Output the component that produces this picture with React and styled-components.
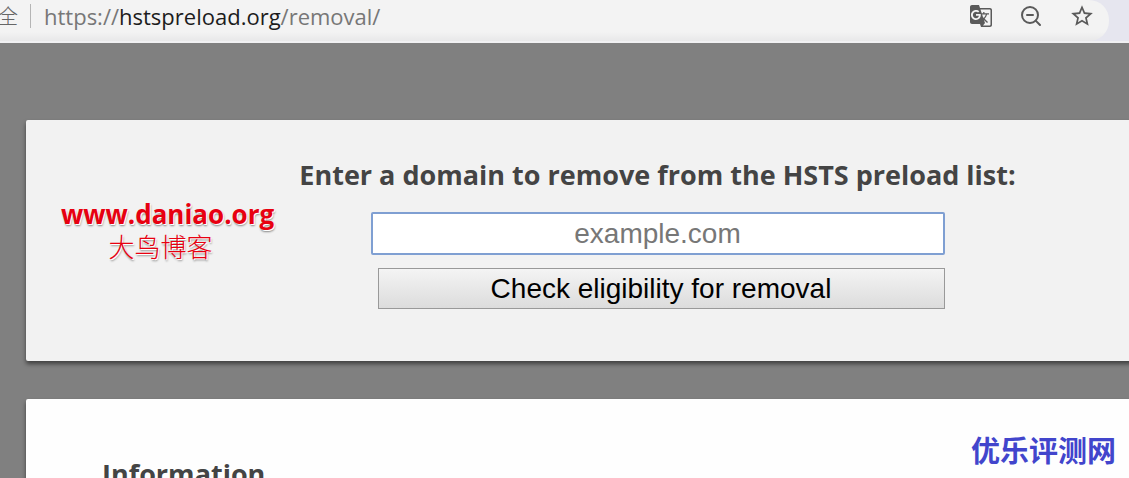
import React, { useState } from 'react';
import styled, { createGlobalStyle } from 'styled-components';
import { MdGTranslate, MdStarBorder } from 'react-icons/md';
import { ZoomOut } from 'lucide-react';

const App = () => {
    const [domain, setDomain] = useState('');

    return (
        <Page>
            <GlobalStyle />
            <Toolbar>
                <AddressBar>
                    <Security>全</Security>
                    <Divider />
                    <Url>https://<Host>hstspreload.org</Host>/removal/</Url>
                    <Actions>
                        <IconButton type="button" aria-label="Translate this page"><MdGTranslate size={24} /></IconButton>
                        <IconButton type="button" aria-label="Zoom out"><ZoomOut size={24} /></IconButton>
                        <IconButton type="button" aria-label="Bookmark this page"><MdStarBorder size={26} /></IconButton>
                    </Actions>
                </AddressBar>
            </Toolbar>
            <Content>
                <Card $background="#f2f2f2">
                    <Form onSubmit={(event) => event.preventDefault()}>
                        <Question htmlFor="domain">Enter a domain to remove from the HSTS preload list:</Question>
                        <Fields>
                            <DomainInput id="domain" type="text" placeholder="example.com" value={domain} onChange={(event) => { setDomain(event.target.value); }} />
                            <SubmitButton type="submit">Check eligibility for removal</SubmitButton>
                        </Fields>
                    </Form>
                    <BlogMark>
                        <strong>www.daniao.org</strong>
                        <BlogName>大鸟博客</BlogName>
                    </BlogMark>
                </Card>
                <Card $background="#fefefe">
                    <InfoTitle>Information</InfoTitle>
                </Card>
            </Content>
            <SiteMark>优乐评测网</SiteMark>
        </Page>
    );
}

const GlobalStyle = createGlobalStyle`
    * {
        box-sizing: border-box;
    }
    body {
        margin: 0;
        background: #808080;
        font-family: "Open Sans", "Noto Sans CJK SC", sans-serif;
    }
    `;

const Page = styled.div`
    position: relative;
    height: 100vh;
    overflow: hidden;
    `;

const Toolbar = styled.header`
    height: 43px;
    padding-right: 20px;
    background: #e6e6ef;
    border-bottom: 2px solid #f0f0f2;
    `;

const AddressBar = styled.div`
    display: flex;
    align-items: center;
    height: 41px;
    padding-bottom: 9px;
    background: linear-gradient(#f3f3f3 32px, #e8e8e9);
    border-radius: 0 20px 20px 0;
    `;

const Security = styled.span`
    display: flex;
    justify-content: flex-end;
    width: 18px;
    overflow: hidden;
    color: #666;
    font-family: "Noto Sans CJK SC", sans-serif;
    font-size: 20px;
    font-weight: 300;
    line-height: 32px;
    `;

const Divider = styled.span`
    width: 1px;
    height: 24px;
    margin: 0 13px 0 12px;
    background: #b5b5b5;
    `;

const Url = styled.span`
    color: #777;
    font-size: 22px;
    line-height: 32px;
    `;

const Host = styled.span`
    color: #1c1c1c;
    `;

const Actions = styled.div`
    display: flex;
    align-items: center;
    gap: 26px;
    margin-left: auto;
    padding-right: 14px;
    `;

const IconButton = styled.button`
    display: flex;
    padding: 0;
    border: none;
    background: none;
    color: #5a5a5a;
    `;

const Content = styled.main`
    display: flex;
    flex-direction: column;
    gap: 38px;
    margin-right: -160px;
    padding: 77px 0 0 26px;
    `;

const Card = styled.section`
    position: relative;
    min-height: 241px;
    padding: 35px 0;
    background: ${(props) => props.$background};
    border-radius: 2px;
    box-shadow: 0 3px 4px rgba(0, 0, 0, 0.5);
    `;

const Form = styled.form`
    display: flex;
    flex-direction: column;
    align-items: center;
    gap: 17px;
    `;

const Question = styled.label`
    color: #444;
    font-size: 27px;
    font-weight: bold;
    line-height: 40px;
    white-space: nowrap;
    `;

const Fields = styled.div`
    display: flex;
    flex-direction: column;
    align-items: flex-end;
    gap: 13px;
    width: 574px;
    `;

const DomainInput = styled.input`
    width: 100%;
    height: 43px;
    border: 2px solid #7f9fd2;
    border-radius: 2px;
    outline: none;
    background: #fff;
    color: #222;
    font-family: "Liberation Sans", sans-serif;
    font-size: 28px;
    text-align: center;
    &::placeholder{
        color: #777;
    }
    `;

const SubmitButton = styled.button`
    width: 567px;
    height: 41px;
    padding: 0;
    border: 1px solid #999;
    background: linear-gradient(#f4f4f4, #dcdcdc);
    color: #000;
    font-family: "Liberation Sans", sans-serif;
    font-size: 28px;
    `;

const BlogMark = styled.div`
    position: absolute;
    top: 79px;
    left: 35px;
    display: flex;
    flex-direction: column;
    align-items: center;
    color: #e80010;
    font-size: 26px;
    line-height: 31px;
    text-shadow: 1px 1px 0 #fff, 1px 2px 2px #888;
    `;

const BlogName = styled.span`
    padding-right: 14px;
    font-family: "Noto Sans CJK SC", sans-serif;
    font-weight: 300;
    `;

const InfoTitle = styled.h2`
    margin: 0;
    padding: 20px 76px;
    color: #444;
    font-size: 27px;
    line-height: 40px;
    `;

const SiteMark = styled.div`
    position: absolute;
    right: 13px;
    bottom: 9px;
    color: #4245cc;
    font-family: "Noto Sans CJK SC", sans-serif;
    font-size: 29px;
    font-weight: bold;
    line-height: 40px;
    `;

export default App;
